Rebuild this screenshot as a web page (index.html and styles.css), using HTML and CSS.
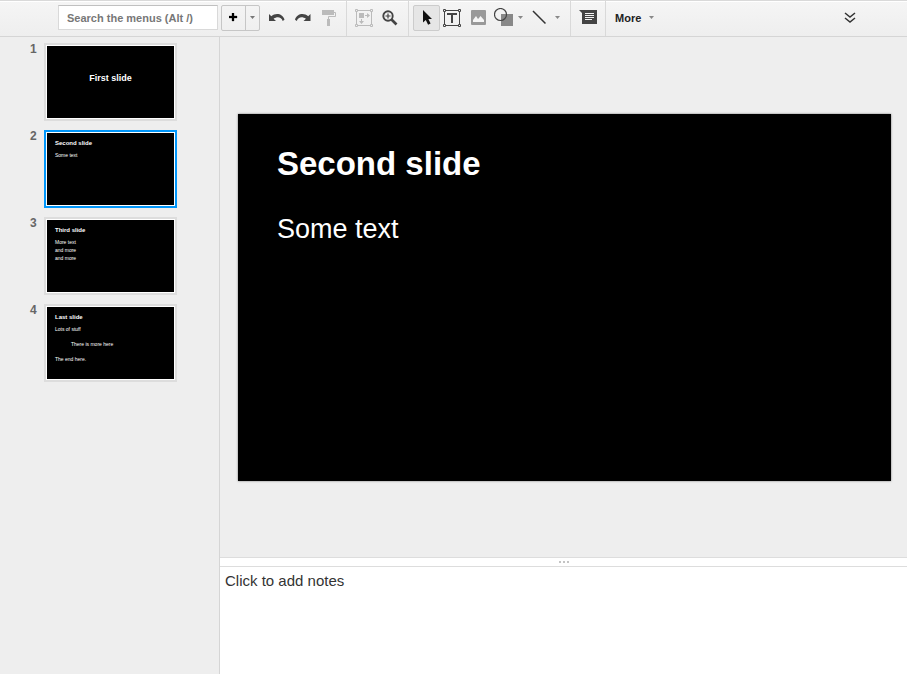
FILE: index.html
```html
<!DOCTYPE html>
<html lang="en">
<head>
<meta charset="utf-8">
<title>Presentation editor</title>
<link rel="stylesheet" href="styles.css">
</head>
<body>
<header class="toolbar">
  <div class="group group-first">
    <input class="search" type="text" aria-label="Search the menus" placeholder="Search the menus (Alt /)">
    <div class="split">
      <button class="split-main" type="button" aria-label="New slide"><svg width="9" height="9"><path d="M3 0h2v3h3v2H5v3H3V5H0V3h3z" fill="#000" stroke="#000" stroke-width=".3"/></svg></button>
      <button class="split-caret" type="button" aria-label="New slide options"><svg width="5" height="3"><path d="M0 0h5L2.500 3z" fill="#777"/></svg></button>
    </div>
    <button class="tool" type="button" aria-label="Undo"><svg width="16" height="16" viewBox="0 0 16 16"><path d="M0 4v7h7L4.600 8.700C8 6.300 12.300 6.600 13.700 11L15.500 9.800C13.800 3.500 6.500 2.500 2.300 6.300z" fill="#444"/></svg></button>
    <button class="tool" type="button" aria-label="Redo"><svg width="16" height="16" viewBox="0 0 16 16"><path d="M15.500 4v7h-7l2.400-2.300C7.500 6.300 3.200 6.600 1.800 11L0 9.800C1.700 3.500 9 2.500 13.200 6.300z" fill="#444"/></svg></button>
    <button class="tool" type="button" aria-label="Paint format"><svg width="16" height="16" viewBox="0 0 16 16"><path d="M1 0h12v5H1zM6 9h3v7H6z" fill="#bbb"/><path d="M13 2.500h1.500v4h-7V9" fill="none" stroke="#bbb"/></svg></button>
  </div>
  <div class="group group-zoom">
    <button class="tool" type="button" aria-label="Zoom to fit"><svg width="20" height="20" viewBox="0 0 20 20"><path d="M2.500 2.500h15v15h-15z" fill="none" stroke="#bbb"/><g fill="#f1f1f1" stroke="#bbb"><path d="M1.500 1.500h2v2h-2zM16.500 1.500h2v2h-2zM1.500 16.500h2v2h-2zM16.500 16.500h2v2h-2z"/></g><path d="M5 5h5v5H5zM11 7h2V5l3 2.500-3 2.500V8h-2zM7 11h1v2h2l-2.500 3L5 13h2z" fill="#bbb"/></svg></button>
    <button class="tool" type="button" aria-label="Zoom"><svg width="16" height="16" viewBox="0 0 16 16"><circle cx="6" cy="6" r="4.700" fill="none" stroke="#444" stroke-width="1.900"/><path d="M9.500 9.500L14.500 14.500" stroke="#444" stroke-width="2.600"/><path d="M3.500 6h5M6 3.500v5" stroke="#444" stroke-width="1.200"/></svg></button>
  </div>
  <div class="group">
    <button class="tool selected" type="button" aria-label="Select" aria-pressed="true"><svg width="16" height="16" viewBox="0 0 16 16"><path d="M4 0v12.500l2.800-2.500 2.300 4.700 2.500-1.200L9.400 9H13z" fill="#111"/></svg></button>
    <button class="tool" type="button" aria-label="Text box"><svg width="20" height="20" viewBox="0 0 20 20"><path d="M1.500 2.500h15v15h-15z" fill="none" stroke="#444"/><g fill="#f1f1f1" stroke="#444"><path d="M.5 1.500h2v2h-2zM15.500 1.500h2v2h-2zM.5 16.500h2v2h-2zM15.500 16.500h2v2h-2z"/></g><path d="M4 5h10v2h-4v8H8V7H4z" fill="#444"/></svg></button>
    <button class="tool" type="button" aria-label="Image"><svg width="16" height="16" viewBox="0 0 16 16"><rect width="15" height="15" rx="1" fill="#999"/><path d="M2 12v-2l3-4 2 3 1-1 1.500-2L13 10v2z" fill="#f5f5f5"/></svg></button>
    <button class="tool menu-tool" type="button" aria-label="Shape"><svg width="20" height="20" viewBox="0 0 20 20"><path d="M7 6h12v12H7z" fill="#888"/><circle cx="6.500" cy="6.500" r="6" fill="none" stroke="#444" stroke-width="1.200"/></svg><svg width="5" height="3"><path d="M0 0h5L2.500 3z" fill="#888"/></svg></button>
    <button class="tool menu-tool" type="button" aria-label="Line"><svg width="16" height="16" viewBox="0 0 16 16"><path d="M2 1l12.500 12.500" stroke="#333" stroke-width="1.500"/></svg><svg width="5" height="3"><path d="M0 0h5L2.500 3z" fill="#888"/></svg></button>
  </div>
  <div class="group">
    <button class="tool" type="button" aria-label="Comment"><svg width="18" height="16" viewBox="0 0 18 16"><path d="M0 0h18v14H3V3z" fill="#444"/><path d="M6 3.500h9M6 5.500h9M6 7.500h9M6 9.500h7" stroke="#f3f3f3"/></svg></button>
  </div>
  <button class="more" type="button">More <svg width="5" height="3"><path d="M0 0h5L2.500 3z" fill="#888"/></svg></button>
  <button class="tool collapse" type="button" aria-label="Hide the menus"><svg width="12" height="12" viewBox="0 0 12 12"><path d="M1 1l5 4 5-4M1 6l5 4 5-4" fill="none" stroke="#333" stroke-width="1.500"/></svg></button>
</header>
<div class="workspace">
  <nav class="filmstrip" aria-label="Slides">
    <ol class="thumbs">
      <li class="thumb-row"><span class="number">1</span><a class="thumb thumb-cover" href="#slide"><strong>First slide</strong></a></li>
      <li class="thumb-row"><span class="number">2</span><a class="thumb current" href="#slide" aria-current="true"><strong>Second slide</strong><span>Some text</span></a></li>
      <li class="thumb-row"><span class="number">3</span><a class="thumb" href="#slide"><strong>Third slide</strong><span>More text</span><span>and more</span><span>and more</span></a></li>
      <li class="thumb-row"><span class="number">4</span><a class="thumb spaced" href="#slide"><strong>Last slide</strong><span>Lots of stuff</span><span class="indented">There is more here</span><span>The end here.</span></a></li>
    </ol>
  </nav>
  <main class="editor">
    <section class="stage">
      <article class="slide" id="slide">
        <h1>Second slide</h1>
        <p>Some text</p>
      </article>
    </section>
    <div class="splitter"><i></i><i></i><i></i></div>
    <textarea class="notes" aria-label="Speaker notes" placeholder="Click to add notes"></textarea>
  </main>
</div>
</body>
</html>
```

FILE: styles.css
```css
* {
  box-sizing: border-box;
}

body {
  margin: 0;
  min-height: 100vh;
  display: flex;
  flex-direction: column;
  background: #eee;
  color: #333;
  font-family: "Liberation Sans", Arial, sans-serif;
}

button {
  margin: 0;
  padding: 0;
  border: 0;
  background: none;
  font: inherit;
}

svg {
  display: block;
  flex: none;
}

/* Toolbar */
.toolbar {
  display: flex;
  height: 37px;
  border-top: 1px solid #d9d9d9;
  border-bottom: 1px solid #d5d5d5;
  background: linear-gradient(#f5f5f5, #eee);
  box-shadow: inset 0 1px #fff;
}

.group {
  display: flex;
  align-items: center;
  padding: 0 4px 2px;
  border-right: 1px solid #d9d9d9;
}

.group-first {
  padding-left: 58px;
}

.group-zoom {
  padding-right: 5px;
}

.search {
  width: 160px;
  height: 25px;
  margin-right: 3px;
  padding: 0 8px;
  border: 1px solid #d9d9d9;
  border-top-color: #c0c0c0;
  border-radius: 0;
  background: #fff;
  font: bold 11px "Liberation Sans", Arial, sans-serif;
}

.search::placeholder {
  color: #777;
  opacity: 1;
}

.split {
  display: flex;
  height: 26px;
  margin-right: 4px;
  border: 1px solid #c6c6c6;
  border-radius: 2px;
}

.split-main,
.split-caret,
.tool,
.more {
  display: flex;
  align-items: center;
  justify-content: center;
}

.split-main {
  width: 23px;
}

.split-caret {
  width: 14px;
  border-left: 1px solid #c6c6c6;
}

.tool {
  width: 26px;
  height: 26px;
}

.selected {
  width: 27px;
  border: 1px solid #ccc;
  border-radius: 2px;
  background: #e6e6e6;
}

.menu-tool {
  width: 37px;
  justify-content: space-between;
  padding: 0 6px 0 2px;
}

.more {
  gap: 8px;
  padding: 0 9px 2px;
  color: #222;
  font-size: 11px;
  font-weight: bold;
}

.collapse {
  height: 33px;
  margin-left: auto;
  margin-right: 44px;
}

/* Slide list */
.workspace {
  flex: 1;
  display: flex;
}

.filmstrip {
  flex: none;
  width: 220px;
  border-right: 1px solid #d5d5d5;
}

.thumbs {
  display: grid;
  gap: 9px;
  margin: 0;
  padding: 6px 0 0 30px;
  list-style: none;
}

.thumb-row {
  display: flex;
}

.number {
  width: 14px;
  color: #666;
  font-size: 12px;
  font-weight: bold;
  line-height: 12px;
}

.thumb {
  display: flex;
  flex-direction: column;
  width: 133px;
  height: 78px;
  padding: 7px 9px;
  border: 2px solid #ddd;
  background: #000;
  box-shadow: inset 0 0 0 1px #fff;
  color: #fff;
  font-size: 5px;
  line-height: 8px;
  text-decoration: none;
}

.thumb strong {
  margin-bottom: 4px;
  font-size: 6px;
}

.thumb-cover {
  align-items: center;
  padding-top: 29px;
}

.thumb-cover strong {
  font-size: 9px;
}

.current {
  border-color: #0096fa;
}

.spaced {
  row-gap: 7px;
}

.spaced strong {
  margin-bottom: -3px;
}

.indented {
  padding-left: 16px;
}

/* Editor */
.editor {
  flex: 1;
  display: flex;
  flex-direction: column;
}

.stage {
  flex: 1;
  display: flex;
  align-items: center;
  padding: 0 16px 0 18px;
}

.slide {
  width: 100%;
  aspect-ratio: 653 / 367;
  padding: 30px 39px;
  background: #000;
  box-shadow: 0 0 2px #777;
  color: #fff;
}

.slide h1 {
  margin: 0 0 28px;
  font-size: 33px;
  line-height: 40px;
}

.slide p {
  margin: 0;
  font-size: 27px;
  line-height: 34px;
}

.splitter {
  display: flex;
  align-items: center;
  justify-content: center;
  gap: 2px;
  height: 10px;
  border: solid #ddd;
  border-width: 1px 0;
  background: #fff;
}

.splitter i {
  width: 2px;
  height: 2px;
  background: #c4c4c4;
}

.notes {
  display: block;
  width: 100%;
  height: 107px;
  padding: 5px;
  border: 0;
  background: #fff;
  font: 15px/18px "Liberation Sans", Arial, sans-serif;
  resize: none;
}

.notes::placeholder {
  color: #333;
  opacity: 1;
}
```
